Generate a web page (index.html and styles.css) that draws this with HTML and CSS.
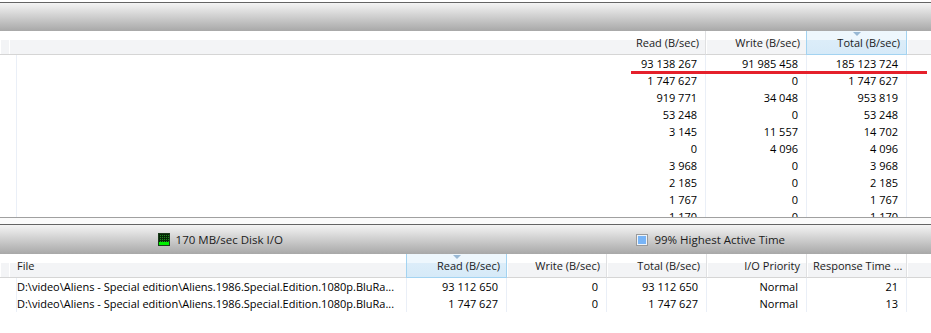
FILE: index.html
```html
<!DOCTYPE html>
<html lang="en">
<head>
<meta charset="UTF-8" />
<meta name="viewport" content="width=device-width, initial-scale=1" />
<title>Disk Activity</title>
<link rel="stylesheet" href="styles.css">
</head>
<body>

<!-- Processes with disk activity -->
<div class="pane pane-top">
  <div class="titlebar"></div>
  <div class="list procs">
    <div class="cell head"></div>
    <div class="cell head num">Read (B/sec)</div>
    <div class="cell head num">Write (B/sec)</div>
    <div class="cell head num sorted">Total (B/sec)</div>
    <div class="cell head last"></div>

    <div class="cell"></div><div class="cell num">93 138 267</div><div class="cell num">91 985 458</div><div class="cell num">185 123 724</div><div class="cell last"></div>
    <div class="cell"></div><div class="cell num">1 747 627</div><div class="cell num">0</div><div class="cell num">1 747 627</div><div class="cell last"></div>
    <div class="cell"></div><div class="cell num">919 771</div><div class="cell num">34 048</div><div class="cell num">953 819</div><div class="cell last"></div>
    <div class="cell"></div><div class="cell num">53 248</div><div class="cell num">0</div><div class="cell num">53 248</div><div class="cell last"></div>
    <div class="cell"></div><div class="cell num">3 145</div><div class="cell num">11 557</div><div class="cell num">14 702</div><div class="cell last"></div>
    <div class="cell"></div><div class="cell num">0</div><div class="cell num">4 096</div><div class="cell num">4 096</div><div class="cell last"></div>
    <div class="cell"></div><div class="cell num">3 968</div><div class="cell num">0</div><div class="cell num">3 968</div><div class="cell last"></div>
    <div class="cell"></div><div class="cell num">2 185</div><div class="cell num">0</div><div class="cell num">2 185</div><div class="cell last"></div>
    <div class="cell"></div><div class="cell num">1 767</div><div class="cell num">0</div><div class="cell num">1 767</div><div class="cell last"></div>
    <div class="cell"></div><div class="cell num">1 170</div><div class="cell num">0</div><div class="cell num">1 170</div><div class="cell last"></div>
  </div>
  <!-- red underline drawn over the first row -->
  <div class="marker"></div>
</div>

<div class="splitter"></div>

<!-- Disk summary + files -->
<div class="pane pane-bottom">
  <div class="titlebar meters">
    <div class="meter meter-left">
      <svg class="icon" width="12" height="13" viewBox="0 0 12 13">
        <defs>
          <pattern id="grid" width="2" height="2" patternUnits="userSpaceOnUse">
            <rect width="2" height="2" fill="#052805"/>
            <rect width="1" height="1" fill="#1f8a1f"/>
          </pattern>
        </defs>
        <rect x="0" y="0" width="12" height="13" fill="#1a3a1a"/>
        <rect x="1" y="1" width="10" height="8" fill="url(#grid)"/>
        <rect x="1" y="9" width="10" height="3" fill="#00f000"/>
      </svg>
      170 MB/sec Disk I/O
    </div>
    <div class="meter meter-right">
      <svg class="icon" width="12" height="12" viewBox="0 0 12 12">
        <rect x="0" y="0" width="12" height="12" fill="#9a9a9a"/>
        <rect x="1" y="1" width="10" height="10" fill="#eef4fa"/>
        <rect x="2" y="2" width="8" height="8" fill="#78b4f6"/>
      </svg>
      99% Highest Active Time
    </div>
  </div>
  <div class="list files">
    <div class="cell head"></div>
    <div class="cell head">File</div>
    <div class="cell head num sorted">Read (B/sec)</div>
    <div class="cell head num">Write (B/sec)</div>
    <div class="cell head num">Total (B/sec)</div>
    <div class="cell head num">I/O Priority</div>
    <div class="cell head clip">Response Time ...</div>
    <div class="cell head last"></div>

    <div class="cell"></div><div class="cell">D:\video\Aliens - Special edition\Aliens.1986.Special.Edition.1080p.BluRa...</div><div class="cell num">93 112 650</div><div class="cell num">0</div><div class="cell num">93 112 650</div><div class="cell num">Normal</div><div class="cell num">21</div><div class="cell last"></div>
    <div class="cell"></div><div class="cell">D:\video\Aliens - Special edition\Aliens.1986.Special.Edition.1080p.BluRa...</div><div class="cell num">1 747 627</div><div class="cell num">0</div><div class="cell num">1 747 627</div><div class="cell num">Normal</div><div class="cell num">13</div><div class="cell last"></div>
  </div>
</div>

</body>
</html>
```

FILE: styles.css
```css
body {
  margin: 0;
  background: #fff;
  font-family: "Open Sans", "Noto Sans", sans-serif;
  font-size: 11px;
  color: #000;
  width: 931px;
  height: 333px;
  overflow: hidden;
}
.pane {
  position: relative;
}
.pane-top {
  padding-top: 2px;
  height: 215px;
  overflow: hidden;
  border-bottom: 1px solid #a0a0a0;
}
.titlebar {
  height: 28px;
  border-top: 1px solid #646464;
  background: linear-gradient(to bottom, #f4f4f4, #a8a8a8);
}
.pane-bottom .titlebar {
  height: 29px;
}
.splitter {
  height: 6px;
  background: #fbfbfb;
}
.list {
  display: grid;
  grid-auto-rows: 17px;
  grid-template-rows: 24px;
  line-height: 17px;
}
.procs {
  grid-template-columns: 9px 697px 101px 100px 1fr;
}
.files {
  grid-template-columns: 9px 398px 100px 100px 100px 100px 100px 1fr;
  height: 58px;
  overflow: hidden;
}
.cell {
  border-right: 1px solid #eaeff7;
  padding: 0 8px;
  white-space: nowrap;
  overflow: hidden;
  text-overflow: ellipsis;
}
.cell.last {
  border-right: none;
}
.cell.num {
  text-align: right;
}
.cell.head {
  height: 23px;
  line-height: 24px;
  padding: 0 6px 0 8px;
  color: #1b1b1b;
  background: linear-gradient(to bottom, #fff 0, #fff 9px, #f3f4f6 9px, #f3f4f6);
  border-right: 1px solid #dfe0e2;
  border-bottom: 1px solid #d5d5d5;
  box-shadow: inset 1px 0 0 #fff;
}
.cell.head.last {
  border-right: none;
}
.cell.clip {
  padding-left: 6px;
  text-overflow: clip;
}
.cell.sorted {
  margin-left: -1px;
  border-left: 1px solid #a3d3f1;
  border-right: 1px solid #a3d3f1;
  border-bottom-color: #a3d3f1;
  background: linear-gradient(to bottom, #eef7fd 0, #eef7fd 9px, #dcedf9 9px, #d6eaf8);
  box-shadow: none;
  position: relative;
  z-index: 1;
}
.cell.sorted::before {
  content: "";
  position: absolute;
  top: 1px;
  left: 50%;
  margin-left: -4px;
  border-left: 4px solid transparent;
  border-right: 4px solid transparent;
  border-top: 4px solid #98b8d4;
}
.pane-bottom {
  height: 87px;
}
.meters {
  display: flex;
  align-items: center;
  color: #1b1b1b;
  font-size: 11.5px;
}
.meter {
  flex: 1;
  display: flex;
  align-items: center;
  justify-content: center;
  gap: 6px;
}
.meter-left {
  padding-right: 22px;
}
.meter-right {
  padding-left: 28px;
}
.icon {
  display: block;
}
.marker {
  position: absolute;
  left: 631px;
  top: 71px;
  width: 296px;
  height: 3px;
  background: #e5202b;
}
```
